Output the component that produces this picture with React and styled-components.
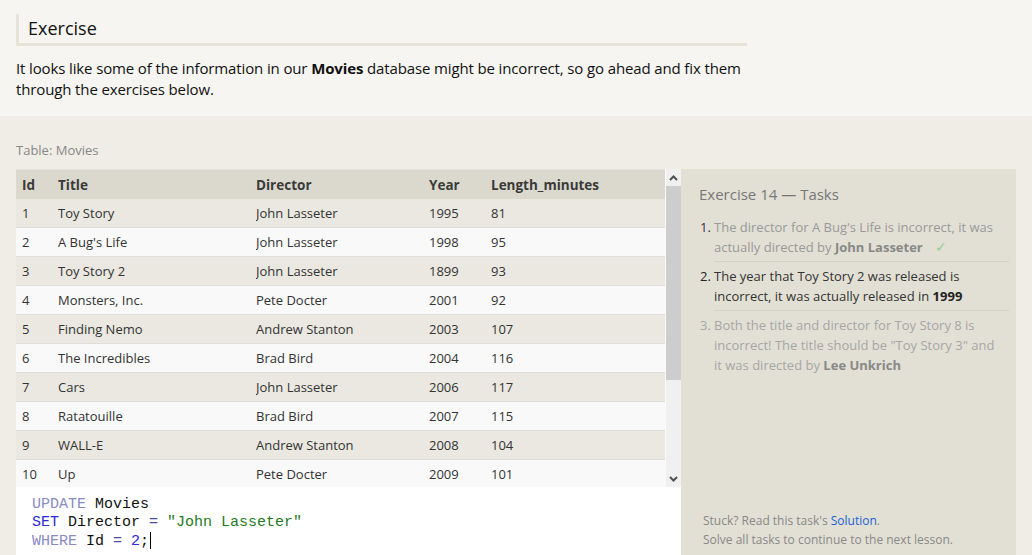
import React from "react";
import styled, { createGlobalStyle } from "styled-components";

const Global = createGlobalStyle`
  html, body { margin: 0; padding: 0; }
  body {
    background: #efede6;
    font-family: "Open Sans", "Noto Sans", sans-serif;
    color: #333;
    overflow: hidden;
  }
`;

const Page = styled.div`
  width: 1032px;
  height: 555px;
  display: flex;
  flex-direction: column;
  overflow: hidden;
`;

const Intro = styled.section`
  background: #f6f5f1;
  padding: 14px 16px 0 16px;
  height: 116px;
  flex: none;
  box-sizing: border-box;
`;

const Heading = styled.h2`
  margin: 0;
  width: 731px;
  box-sizing: border-box;
  height: 32px;
  border-left: 3px solid #e6e4d8;
  border-bottom: 3px solid #e6e4d8;
  padding-left: 9px;
  font-family: "Open Sans", sans-serif;
  font-weight: 400;
  font-size: 18px;
  line-height: 29px;
  color: #111;
`;

const Lead = styled.p`
  margin: 12px 0 0 0;
  width: 732px;
  font-size: 15px;
  letter-spacing: -0.13px;
  line-height: 21px;
  color: #111;
  b { font-weight: 700; }
`;

const Work = styled.section`
  flex: 1;
  padding: 25px 16px 0 16px;
  display: flex;
  flex-direction: column;
`;

const Caption = styled.div`
  font-size: 13px;
  line-height: 18px;
  color: #888;
  margin-bottom: 10px;
`;

const Board = styled.div`
  display: grid;
  grid-template-columns: 649px 16px 335px;
  grid-template-rows: 318px 68px;
`;

const TableViewport = styled.div`
  grid-row: 1;
  grid-column: 1;
  height: 318px;
  overflow: hidden;
  border-top: 1px solid #e6e4da;
  box-sizing: border-box;
`;

const Table = styled.table`
  width: 649px;
  table-layout: fixed;
  border-collapse: collapse;
  font-size: 13px;
  color: #333;
`;

const HeadCell = styled.th`
  background: #dbd9cd;
  height: 29px;
  text-align: left;
  font-weight: 700;
  font-size: 13.5px;
  padding: 0 0 0 ${(p) => p.$pad}px;
  width: ${(p) => p.$w}px;
  box-sizing: border-box;
  color: #3a3a3a;
`;

const Row = styled.tr`
  background: ${(p) => (p.$odd ? "#eae8e1" : "#f9f9f9")};
  border-bottom: 1px solid #deddd7;
`;

const Cell = styled.td`
  height: 28px;
  padding: 0 0 0 ${(p) => p.$pad}px;
  white-space: nowrap;
  overflow: hidden;
`;

const ScrollTrack = styled.div`
  grid-row: 1;
  grid-column: 2;
  background: #f0f0f0;
  border-left: 1px solid #fafafa;
  display: flex;
  flex-direction: column;
  box-sizing: border-box;
`;

const ScrollArrow = styled.div`
  height: 17px;
  display: flex;
  align-items: center;
  justify-content: center;
`;

const Thumb = styled.div`
  height: 194px;
  background: #cdcdcd;
`;

const Spacer = styled.div`
  flex: 1;
`;

const Editor = styled.div`
  grid-row: 2;
  grid-column: 1 / span 2;
  background: #fff;
  padding: 9px 16px 0 16px;
  box-sizing: border-box;
  font-family: "Liberation Mono", "Courier New", monospace;
  font-size: 15px;
  line-height: 18px;
  color: #111;
  white-space: pre;
`;

const Tok = styled.span`
  color: ${(p) => p.$c};
`;

const Caret = styled.span`
  display: inline-block;
  width: 1px;
  height: 17px;
  background: #000;
  vertical-align: -4px;
  margin-left: 1px;
`;

const Panel = styled.aside`
  grid-row: 1 / span 2;
  grid-column: 3;
  background: #e2e0d5;
  padding: 15px 7px 6px 18px;
  display: flex;
  flex-direction: column;
  box-sizing: border-box;
`;

const PanelTitle = styled.div`
  font-size: 15px;
  line-height: 20px;
  color: #777;
  margin-bottom: 9px;
`;

const Tasks = styled.ol`
  list-style: none;
  margin: 0;
  padding: 0;
`;

const Task = styled.li`
  display: flex;
  font-size: 13px;
  line-height: 20px;
  color: ${(p) => (p.$state === "active" ? "#333" : p.$state === "done" ? "#999" : "#a6a6a6")};
  b {
    font-weight: 700;
    color: ${(p) => (p.$state === "active" ? "#222" : "#888")};
  }
`;

const Num = styled.span`
  width: 15px;
  flex: none;
  padding: 4px 0 0 1px;
  box-sizing: border-box;
  color: ${(p) => p.$c};
`;

const TaskBody = styled.div`
  flex: 1;
  padding: 4px 8px 4px 0;
  border-bottom: ${(p) => (p.$last ? "none" : "1px solid #d4d2c6")};
`;

const Check = styled.span`
  color: #8fd08f;
  margin-left: 12px;
  font-size: 14px;
`;

const Footer = styled.div`
  margin-top: auto;
  padding-left: 4px;
  font-size: 12px;
  line-height: 19px;
  color: #888;
  a { color: #1a5fd6; text-decoration: none; }
`;

const Chevron = ({ up }) => (
  <svg width="9" height="6" viewBox="0 0 9 6">
    <path
      d={up ? "M1 5 L4.5 1.5 L8 5" : "M1 1 L4.5 4.5 L8 1"}
      fill="none"
      stroke="#505050"
      strokeWidth="2"
    />
  </svg>
);

const movies = [
  [1, "Toy Story", "John Lasseter", 1995, 81],
  [2, "A Bug's Life", "John Lasseter", 1998, 95],
  [3, "Toy Story 2", "John Lasseter", 1899, 93],
  [4, "Monsters, Inc.", "Pete Docter", 2001, 92],
  [5, "Finding Nemo", "Andrew Stanton", 2003, 107],
  [6, "The Incredibles", "Brad Bird", 2004, 116],
  [7, "Cars", "John Lasseter", 2006, 117],
  [8, "Ratatouille", "Brad Bird", 2007, 115],
  [9, "WALL-E", "Andrew Stanton", 2008, 104],
  [10, "Up", "Pete Docter", 2009, 101],
  [11, "Toy Story 8", "John Lasseter", 2010, 103],
];

const cols = [
  { label: "Id", w: 42, pad: 6 },
  { label: "Title", w: 198, pad: 0 },
  { label: "Director", w: 173, pad: 0 },
  { label: "Year", w: 62, pad: 0 },
  { label: "Length_minutes", w: 174, pad: 0 },
];

export default function App() {
  return (
    <Page>
      <Global />
      <Intro>
        <Heading>Exercise</Heading>
        <Lead>
          It looks like some of the information in our <b>Movies</b> database
          might be incorrect, so go ahead and fix them through the exercises
          below.
        </Lead>
      </Intro>
      <Work>
        <Caption>Table: Movies</Caption>
        <Board>
          <TableViewport>
            <Table>
              <thead>
                <tr>
                  {cols.map((c) => (
                    <HeadCell key={c.label} $w={c.w} $pad={c.pad}>
                      {c.label}
                    </HeadCell>
                  ))}
                </tr>
              </thead>
              <tbody>
                {movies.map((m, i) => (
                  <Row key={m[0]} $odd={i % 2 === 0}>
                    {m.map((v, j) => (
                      <Cell key={j} $pad={cols[j].pad}>
                        {v}
                      </Cell>
                    ))}
                  </Row>
                ))}
              </tbody>
            </Table>
          </TableViewport>
          <ScrollTrack>
            <ScrollArrow>
              <Chevron up />
            </ScrollArrow>
            <Thumb />
            <Spacer />
            <ScrollArrow>
              <Chevron />
            </ScrollArrow>
          </ScrollTrack>
          <Editor>
            <Tok $c="#8a8ac4">UPDATE</Tok> Movies{"\n"}
            <Tok $c="#2a2ad8">SET</Tok> Director <Tok $c="#4a4aa0">=</Tok>{" "}
            <Tok $c="#1f7a1f">"John Lasseter"</Tok>
            {"\n"}
            <Tok $c="#8a8ac4">WHERE</Tok> Id <Tok $c="#4a4aa0">=</Tok>{" "}
            <Tok $c="#2a2ad8">2</Tok>;<Caret />
          </Editor>
          <Panel>
            <PanelTitle>Exercise 14 — Tasks</PanelTitle>
            <Tasks>
              <Task $state="done">
                <Num $c="#3a2a48">1.</Num>
                <TaskBody>
                  The director for A Bug's Life is incorrect, it was actually
                  directed by <b>John Lasseter</b>
                  <Check>✓</Check>
                </TaskBody>
              </Task>
              <Task $state="active">
                <Num $c="#222">2.</Num>
                <TaskBody>
                  The year that Toy Story 2 was released is incorrect, it was
                  actually released in <b>1999</b>
                </TaskBody>
              </Task>
              <Task $state="todo">
                <Num $c="#a6a6a6">3.</Num>
                <TaskBody $last>
                  Both the title and director for Toy Story 8 is incorrect! The
                  title should be "Toy Story 3" and it was directed by{" "}
                  <b>Lee Unkrich</b>
                </TaskBody>
              </Task>
            </Tasks>
            <Footer>
              Stuck? Read this task's <a href="#">Solution</a>.
              <br />
              Solve all tasks to continue to the next lesson.
            </Footer>
          </Panel>
        </Board>
      </Work>
    </Page>
  );
}
